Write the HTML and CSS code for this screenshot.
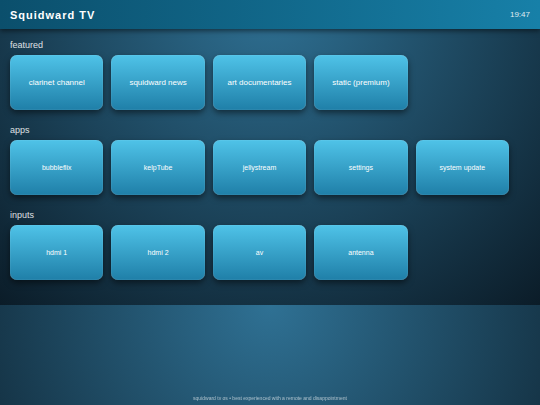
FILE: index.html
```html
<!DOCTYPE html>
<html lang="en">
<head>
  <meta charset="UTF-8">
  <title>Squidward TV</title>
  <link rel="stylesheet" href="styles.css">
</head>
<body>

  <header class="topbar">
    <h1 class="logo">Squidward TV</h1>
    <div class="clock">19:47</div>
  </header>

  <main class="screen">
    <section class="row">
      <h2>featured</h2>
      <div class="tiles">
        <button class="tile large">clarinet channel</button>
        <button class="tile large">squidward news</button>
        <button class="tile large">art documentaries</button>
        <button class="tile large">static (premium)</button>
      </div>
    </section>

    <section class="row">
      <h2>apps</h2>
      <div class="tiles">
        <button class="tile">bubbleflix</button>
        <button class="tile">kelpTube</button>
        <button class="tile">jellystream</button>
        <button class="tile">settings</button>
        <button class="tile">system update</button>
      </div>
    </section>

    <section class="row">
      <h2>inputs</h2>
      <div class="tiles">
        <button class="tile">hdmi 1</button>
        <button class="tile">hdmi 2</button>
        <button class="tile">av</button>
        <button class="tile">antenna</button>
      </div>
    </section>
  </main>

  <footer class="footer">squidward tv os • best experienced with a remote and disappointment</footer>

</body>
</html>
```

FILE: styles.css
```css
* {
  box-sizing: border-box;
}

/* The gradient is as tall as the body and repeats below it */
body {
  margin: 0;
  font-family: Arial, "Liberation Sans", sans-serif;
  background: radial-gradient(circle at top, #2f7194, #0b1c28);
  color: #fff;
}

/* Top bar */
.topbar {
  display: flex;
  align-items: center;
  justify-content: space-between;
  padding: 8px 10px 7px;
  background: linear-gradient(90deg, #0b4f6c, #1780a8);
  box-shadow: 0 2px 5px rgba(0, 0, 0, 0.5);
}
.logo {
  margin: 0;
  font-size: 11px;
  line-height: 14px;
  letter-spacing: 1px;
}
.clock {
  font-size: 8px;
  line-height: 14px;
  opacity: 0.85;
}

/* Rows of tiles */
.screen {
  padding: 10px 31px 11px 10px;
}
.row {
  margin-bottom: 14px;
}
.row h2 {
  margin: 0 0 4px;
  font-size: 9px;
  line-height: 12px;
  font-weight: normal;
  opacity: 0.85;
}
.tiles {
  display: grid;
  grid-template-columns: repeat(5, 1fr);
  gap: 8px;
}
.tile {
  height: 55px;
  padding: 0;
  border: none;
  border-radius: 7px;
  background: linear-gradient(180deg, #4fc3e8, #1f7fa8);
  box-shadow: 0 3px 6px rgba(0, 0, 0, 0.5), inset 0 0 1px rgba(255, 255, 255, 0.5);
  color: #fff;
  font-family: inherit;
  font-size: 7px;
  cursor: pointer;
}
.tile.large {
  font-size: 8px;
}
.tile:focus {
  outline: 2px solid #fff;
}

/* Footer note */
.footer {
  position: fixed;
  bottom: 4px;
  left: 0;
  width: 100%;
  font-size: 5px;
  line-height: 6px;
  text-align: center;
  opacity: 0.6;
}
```
